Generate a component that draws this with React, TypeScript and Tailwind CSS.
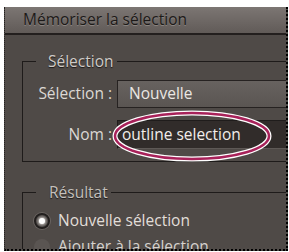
import React from 'react';

const font = { fontFamily: '"Open Sans", "Noto Sans", sans-serif' };

function Radio({ checked }: { checked?: boolean }) {
  if (checked) {
    return (
      <span className="w-[16px] h-[16px] rounded-full border-2 border-[#1f1c1b] bg-[#4a4543] flex items-center justify-center shadow-[0_0_0_1px_#6a6461]">
        <span className="w-[6px] h-[6px] rounded-full bg-white shadow-[0_0_3px_1px_#d8d4d0]" />
      </span>
    );
  }
  return <span className="w-[16px] h-[16px] rounded-full bg-[#5a5552]" />;
}

export default function App() {
  return (
    <div className="relative w-[289px] h-[252px] bg-white pt-[7px] pl-[4px] overflow-hidden" style={font}>
      <div className="w-[284px] h-[244px] bg-[#4f4a47] border-l border-l-[#242120] border-r-2 border-b-2 border-dotted border-r-black border-b-black overflow-hidden">
        {/* title bar */}
        <div className="h-[28px] bg-gradient-to-b from-[#7c7673] to-[#615b58] border-b-2 border-[#231f1e] flex items-center pl-[18px]">
          <span className="text-[15.5px] text-[#1c1918] [text-shadow:0_1px_0_#8a8480]">Mémoriser la sélection</span>
        </div>

        {/* Sélection group */}
        <fieldset className="mt-[17px] ml-[17px] w-[300px] border border-[#1e1b1a] pl-[13px] pb-[12px]">
          <legend className="pl-[12px] pr-[3px] text-[15.5px] leading-[18px] text-[#cfcbc7] [text-shadow:0_1px_1px_#1a1716]">
            Sélection
          </legend>
          <div className="flex flex-col gap-[12px] mt-[10px]">
            <div className="flex items-center">
              <span className="w-[76px] text-right text-[15.5px] whitespace-nowrap text-[#dcd8d4]">Sélection :</span>
              <div className="ml-[5px] flex-1 h-[28px] border border-[#262221] bg-gradient-to-b from-[#67625f] to-[#5a5552] flex items-center pl-[11px]">
                <span className="text-[15.5px] text-[#ebe7e3]">Nouvelle</span>
              </div>
            </div>
            <div className="flex items-center">
              <span className="w-[76px] text-right text-[15.5px] whitespace-nowrap text-[#dcd8d4]">Nom :</span>
              <div className="ml-[5px] flex-1 h-[29px] border border-[#1f1c1b] border-b-[#5e5956] bg-[#312c2a] flex items-center pl-[4px]">
                <span className="text-[15.5px] text-[#f2eeea]">outline selection</span>
              </div>
            </div>
          </div>
        </fieldset>

        {/* Résultat group */}
        <fieldset className="mt-[21px] ml-[17px] w-[300px] h-[80px] border border-[#1e1b1a] pl-[13px]">
          <legend className="pl-[13px] pr-[3px] text-[15.5px] leading-[18px] text-[#c4c0bc] [text-shadow:0_1px_1px_#1a1716]">
            Résultat
          </legend>
          <div className="flex flex-col mt-[6px] -ml-[2px]">
            <div className="h-[27px] flex items-center gap-[8px]">
              <Radio checked />
              <span className="text-[15.5px] text-[#e2ded9]">Nouvelle sélection</span>
            </div>
            <div className="h-[26px] flex items-center gap-[8px]">
              <Radio />
              <span className="text-[15.5px] text-[#d6d2ce]">Ajouter à la sélection</span>
            </div>
          </div>
        </fieldset>
      </div>

      {/* annotation ellipse */}
      <svg className="absolute left-[111px] top-[109px]" width="162" height="54" viewBox="0 0 162 54">
        <ellipse cx="81" cy="27" rx="77" ry="23" fill="none" stroke="#ffffff" strokeWidth="5" />
        <ellipse cx="81" cy="27" rx="77" ry="23" fill="none" stroke="#a8225a" strokeWidth="2.5" />
      </svg>
    </div>
  );
}
